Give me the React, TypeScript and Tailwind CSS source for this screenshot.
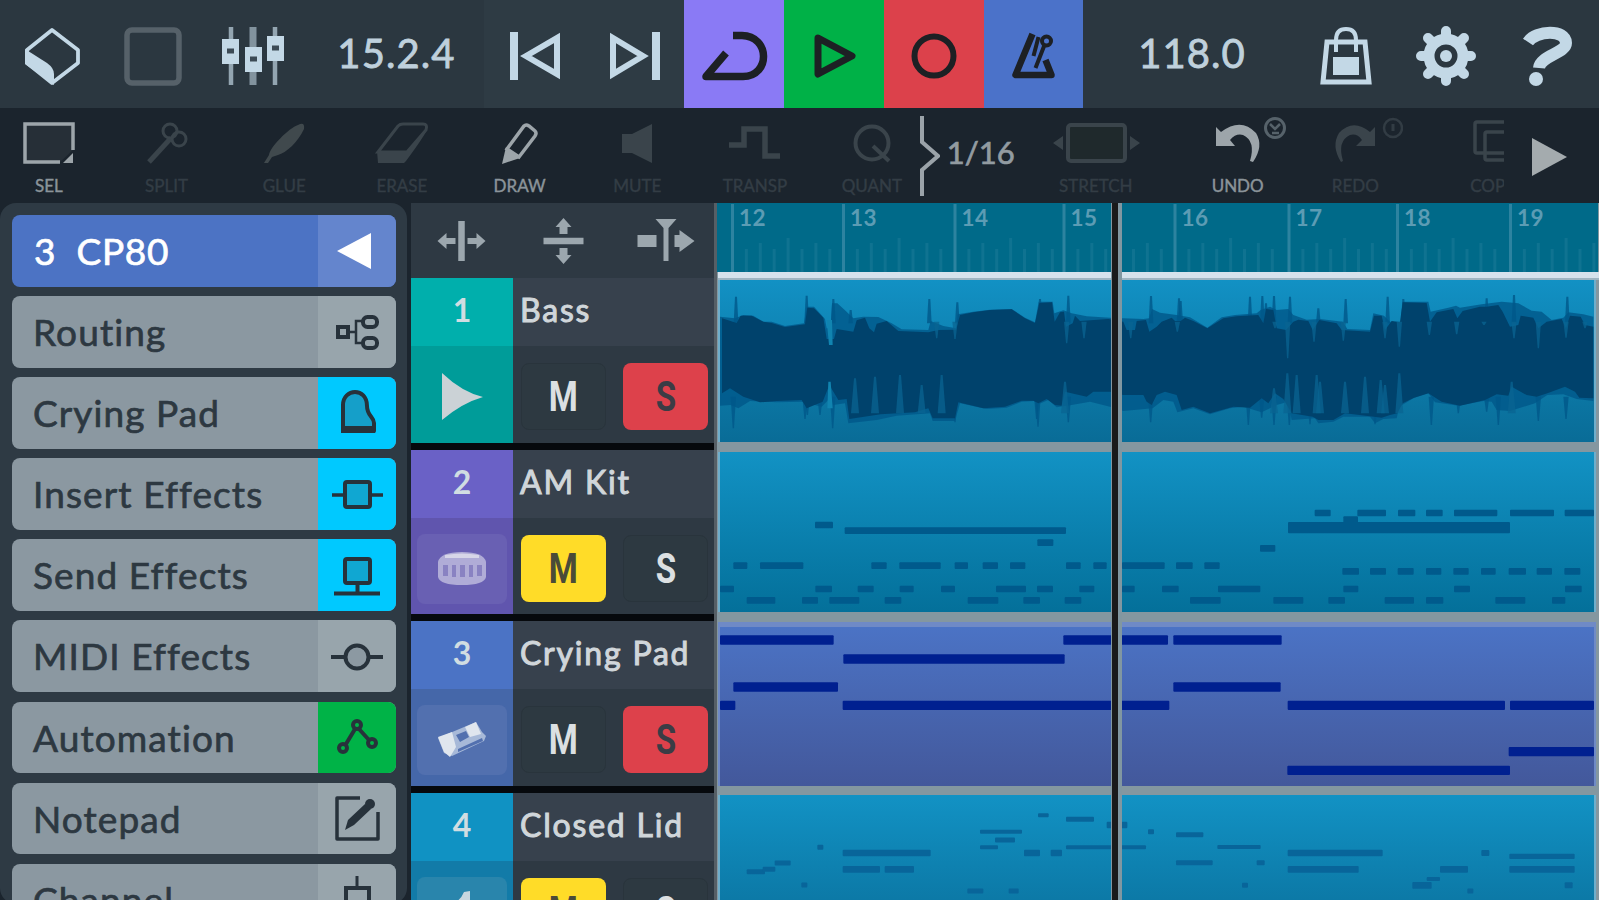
import type { ReactNode } from 'react'

type Note = [x: number, y: number, w: number, h?: number]

// Icons are drawn around a 0,0 centre
function Glyph({ w, h, className = '', children }: { w: number; h: number; className?: string; children: ReactNode }) {
  return (
    <svg width={w} height={h} viewBox={`${-w / 2} ${-h / 2} ${w} ${h}`} className={`shrink-0 ${className}`} fill="none" stroke="currentColor">
      {children}
    </svg>
  )
}

function Tool({ label, active, className = 'w-[117.7px]', children }: { label: string; active?: boolean; className?: string; children: ReactNode }) {
  return (
    <div className={`flex shrink-0 flex-col items-center ${className} ${active ? 'text-[#9da5aa]' : 'text-[#3a444b]'}`}>
      <Glyph w={96} h={60} className="mt-[5px]">{children}</Glyph>
      <span className={`mt-[2px] text-[17px] leading-[22px] whitespace-nowrap [-webkit-text-stroke:0.4px] ${active ? 'text-[#8b949a]' : 'text-[#333d45]'}`}>{label}</span>
    </div>
  )
}

function TopBar() {
  return (
    <header className="flex h-[108px] shrink-0 items-stretch bg-[#2b3740] text-[#c3d8e6]">
      <div className="flex w-[103px] items-center justify-center">
        <Glyph w={70} h={70} className="mt-[4px]">
          <path d="M0 -26 L-25 -6 V7 L0 27 L26 7 V-6 Z" strokeWidth="3.8" strokeLinejoin="round" />
          <path d="M-27 -7 L-5 7 Q2 12 2 18 V29 L-27 8 Z" fill="currentColor" stroke="none" />
        </Glyph>
      </div>
      <div className="flex w-[100px] items-center justify-center text-[#566169]">
        <Glyph w={70} h={70} className="mt-[4px]">
          <rect x="-26" y="-26" width="52" height="53" rx="5" strokeWidth="5.5" />
        </Glyph>
      </div>
      <div className="flex w-[100px] items-center justify-center">
        <Glyph w={80} h={70} className="mt-[4px]">
          <path d="M-22 -29 V29 M22 -29 V29" strokeWidth="4.5" stroke="#93a5b1" />
          <path d="M0 -29 V29" strokeWidth="7" stroke="#82939e" />
          <g fill="currentColor" stroke="none">
            <rect x="-31" y="-17" width="17" height="25" />
            <rect x="-8" y="-9" width="17" height="25" />
            <rect x="14" y="-20" width="17" height="25" />
          </g>
          <path d="M-26 -5 h7 M-3 3 h7 M19 -8 h7" strokeWidth="5" stroke="#3c4a55" />
        </Glyph>
      </div>
      <div className="flex w-[181px] items-center justify-center pb-[2px] pl-[6px] text-[40px] tracking-[1.1px] text-[#bfd0dc] [-webkit-text-stroke:0.8px]">15.2.4</div>
      <div className="flex w-[200px] items-center bg-[#2e3b44]">
        <Glyph w={100} h={70} className="mt-[4px]">
          <path d="M-20 -24 V24" strokeWidth="8" />
          <path d="M-8 0 L23 -18 V18 Z" strokeWidth="6" />
        </Glyph>
        <Glyph w={100} h={70} className="mt-[4px]">
          <path d="M22 -24 V24" strokeWidth="8" />
          <path d="M9 0 L-21 -18 V18 Z" strokeWidth="6" />
        </Glyph>
      </div>
      <div className="flex w-[100px] items-center bg-[#8a7af5] text-[#1d2024]">
        <Glyph w={100} h={70} className="mt-[4px]">
          <path d="M-1 -20.500 H8 C36 -20 37 20 9 20.500 H-28 L-8 -3" strokeWidth="7.500" strokeLinejoin="round" />
        </Glyph>
      </div>
      <div className="flex w-[100px] items-center bg-[#00b147] text-[#1d2024]">
        <Glyph w={100} h={70} className="mt-[4px]">
          <path d="M-16 -18 L18 0 L-16 18 Z" strokeWidth="7" strokeLinejoin="round" />
        </Glyph>
      </div>
      <div className="flex w-[100px] items-center bg-[#dc414b] text-[#1d2024]">
        <Glyph w={100} h={70} className="mt-[4px]">
          <circle cx="0" cy="0" r="19.500" strokeWidth="6" />
        </Glyph>
      </div>
      <div className="flex w-[99px] items-center bg-[#4b72c9] text-[#1d2024]">
        <Glyph w={99} h={70} className="mt-[4px]">
          <path d="M-1 -22 L-18 19 H18 L12 4" strokeWidth="6.500" strokeLinejoin="round" />
          <path d="M2 12 L11 -11 M0 0 L5 -19" strokeWidth="4" />
          <circle cx="13" cy="-15" r="4.500" strokeWidth="4" />
        </Glyph>
      </div>
      <div className="flex w-[213px] items-center justify-center pb-[2px] pl-[5px] text-[40px] tracking-[1.1px] text-[#bfd0dc] [-webkit-text-stroke:0.8px]">118.0</div>
      <div className="flex w-[100px] items-center">
        <Glyph w={100} h={70} className="mt-[4px]">
          <path d="M-19 -14 H19 L23 26 H-23 Z" strokeWidth="5" />
          <path d="M-10 -4 V-16 Q-10 -27 0 -27 Q10 -27 10 -16 V-4" strokeWidth="4" />
          <rect x="-13" y="1" width="26" height="18" fill="currentColor" stroke="none" />
        </Glyph>
      </div>
      <div className="flex w-[101px] items-center">
        <Glyph w={100} h={70} className="mt-[4px]">
          <circle r="17" strokeWidth="11" />
          <circle r="6" fill="currentColor" stroke="none" />
          <path
            d="M0 -20 V-25 M0 20 V25 M-20 0 H-25 M20 0 H25 M14 -14 L18 -18 M-14 14 L-18 18 M14 14 L18 18 M-14 -14 L-18 -18"
            strokeWidth="10"
            strokeLinecap="round"
          />
        </Glyph>
      </div>
      <div className="flex w-[102px] items-center">
        <Glyph w={102} h={70} className="mt-[4px]">
          <path d="M-20 -14 C-12 -26 18 -27 18 -13 C18 -3 -8 0 -9 12" strokeWidth="12" />
          <circle cx="-12" cy="23" r="7" fill="currentColor" stroke="none" />
        </Glyph>
      </div>
    </header>
  )
}

function Toolbar() {
  return (
    <div className="flex h-[95px] shrink-0 bg-[#1b242d]">
      <Tool label="SEL" active className="-ml-[10px] w-[117.7px]">
        <path d="M24 7 V-19 H-24 V19 H11" strokeWidth="3.5" fill="#262f37" />
        <path d="M24 10 V20 H14 Z" fill="currentColor" stroke="none" />
      </Tool>
      <Tool label="SPLIT">
        <path d="M-18 19 L4 -5" strokeWidth="5" />
        <circle cx="3" cy="-12" r="7" strokeWidth="3" />
        <circle cx="12" cy="-4" r="7" strokeWidth="3" />
      </Tool>
      <Tool label="GLUE">
        <path d="M-20 20 L-15 12 C-14 4 5 -15 14 -18 Q21 -22 20 -14 C14 -1 2 10 -6 12 L-12 14 L-16 20 Z" fill="#40494d" stroke="none" />
      </Tool>
      <Tool label="ERASE">
        <path d="M-24 9 L-4 -17 Q-2 -19 1 -19 H21 Q26 -19 24 -13 L5 9 Z" strokeWidth="3" />
        <path d="M-25 8 H5 L25 -14 Q24 -9 4 18 L2 20 H-24 Z" fill="currentColor" stroke="none" />
      </Tool>
      <Tool label="DRAW" active>
        <path d="M-13 6 L4 -17 Q6 -19 9 -17 L15 -12 Q17 -10 15 -7 L-1 14 Z" strokeWidth="3.5" />
        <path d="M-14 4 L0 15 L-18 21 Z" fill="currentColor" stroke="none" />
      </Tool>
      <Tool label="MUTE">
        <path d="M-15 -9 H-5 L15 -19 V20 L-5 10 H-15 Z" fill="currentColor" stroke="none" />
      </Tool>
      <Tool label="TRANSP">
        <path d="M-26 2 H-11 V-14 H10 V13 H25" strokeWidth="5.5" />
      </Tool>
      <Tool label="QUANT" className="ml-[12px] w-[92px]">
        <circle cx="0" cy="0" r="16.500" strokeWidth="4" />
        <path d="M1 3 L17 18" strokeWidth="4" />
      </Tool>
      <Glyph w={22} h={80} className="mt-[8px] text-[#9ba3a9]">
        <path d="M-7 -40 V-14 L9 0 L-7 14 V40" strokeWidth="4" />
      </Glyph>
      <span className="mt-[22px] ml-[7px] w-[100px] text-[31px] leading-[44px] text-[#929ba1] [-webkit-text-stroke:0.7px]">1/16</span>
      <Tool label="STRETCH" className="ml-[1px] w-[96px]">
        <rect x="-28" y="-18" width="57" height="36" rx="3" strokeWidth="4" fill="#1f292c" />
        <path d="M-33 -7 V7 L-43 0 Z M34 -7 V7 L44 0 Z" fill="currentColor" stroke="none" />
      </Tool>
      <Tool label="UNDO" active className="ml-[35px] w-[117.7px]">
        <path d="M-22 -16 L-17 -11 Q3 -26 18 -10 Q26 3 15 19 L12 18 Q18 -2 5 -8 Q-2 -10 -8 -3 L-3 3 H-22 Z" fill="currentColor" stroke="none" />
        <circle cx="37" cy="-15" r="9.500" strokeWidth="3" stroke="#56626a" />
        <path d="M32 -19 L37 -14 L42 -19 M34 -10 H41" strokeWidth="2.5" stroke="#56626a" />
      </Tool>
      <Tool label="REDO">
        <path d="M20 -16 L15 -11 Q-2 -25 -16 -10 Q-24 3 -14 19 L-12 18 Q-18 -2 -5 -8 Q2 -10 7 -3 L1 3 H20 Z" fill="currentColor" stroke="none" />
        <circle cx="38" cy="-15" r="9" strokeWidth="2.5" stroke="#323c44" />
        <path d="M38 -19 V-12" strokeWidth="3" stroke="#323c44" />
      </Tool>
      <div className="ml-[56px] w-[34px] overflow-hidden text-[#3a444b]">
        <svg width="60" height="60" viewBox="0 0 60 60" className="mt-[5px]" fill="none" stroke="currentColor" strokeWidth="3.5">
          <rect x="5" y="9" width="34" height="31" rx="2" />
          <rect x="15" y="19" width="34" height="28" rx="2" />
        </svg>
        <span className="mt-[2px] block text-[17px] leading-[22px] whitespace-nowrap text-[#333d45] [-webkit-text-stroke:0.4px]">COPY</span>
      </div>
      <Glyph w={36} h={40} className="mt-[28px] ml-[27px] text-[#a4abae]">
        <path d="M-17 -18 L18 1 L-17 20 Z" fill="currentColor" stroke="none" />
      </Glyph>
    </div>
  )
}

const icons: Record<string, ReactNode> = {
  back: <path d="M-20 0 L14 -18 V18 Z" fill="white" stroke="none" />,
  routing: (
    <g strokeWidth="4">
      <rect x="-19" y="-5" width="10" height="10" />
      <path d="M-9 0 H-1 M6 -11 H-1 V11 H6" strokeWidth="2.5" />
      <rect x="6" y="-15" width="14" height="10" rx="4.500" />
      <rect x="6" y="6" width="14" height="10" rx="4.500" />
    </g>
  ),
  piano: (
    <g>
      <path d="M-14 18 V-8 C-14 -25 10 -26 10 -7 C10 3 17 4 17 10 V18 Z" strokeWidth="4" fill="#159fc9" strokeLinejoin="round" />
      <path d="M-16 16.500 H18" strokeWidth="7" />
    </g>
  ),
  insert: (
    <g strokeWidth="4">
      <rect x="-12" y="-12" width="25" height="25" rx="2" fill="#10a7d2" />
      <path d="M-25 1 H-12 M13 1 H26" strokeWidth="3.500" />
    </g>
  ),
  send: (
    <g strokeWidth="4">
      <rect x="-12" y="-16" width="25" height="24" rx="2" fill="#10a7d2" />
      <path d="M0.500 8 V18 M-23 18.500 H23" />
    </g>
  ),
  midi: (
    <g strokeWidth="4">
      <circle r="11.500" cy="1" fill="#8c99a2" />
      <path d="M-26 1 H-12 M12 1 H26" />
    </g>
  ),
  automation: (
    <g strokeWidth="4">
      <circle cx="0" cy="-12" r="4" />
      <circle cx="-14" cy="11" r="4" />
      <circle cx="15" cy="6" r="4" />
      <path d="M-11 7 L-2 -8 M2 -8 L12 3" />
    </g>
  ),
  notepad: (
    <g>
      <path d="M3 -20 H-20 V21 H21 V-6" strokeWidth="3.500" strokeLinejoin="round" />
      <path d="M-12 12 L-9 2 L8 -14 L14 -9 L-3 7 Z" fill="currentColor" stroke="none" />
      <circle cx="13" cy="-14" r="5" fill="currentColor" stroke="none" />
    </g>
  ),
  channel: (
    <g strokeWidth="4">
      <path d="M0 -24 V-12" strokeWidth="3" />
      <rect x="-11" y="-12" width="23" height="30" />
    </g>
  ),
}

const inspector = [
  { label: 'Routing', icon: 'routing', color: 'bg-[#98a5ac]' },
  { label: 'Crying Pad', icon: 'piano', color: 'bg-[#00c9ff]' },
  { label: 'Insert Effects', icon: 'insert', color: 'bg-[#00c9ff]' },
  { label: 'Send Effects', icon: 'send', color: 'bg-[#00c9ff]' },
  { label: 'MIDI Effects', icon: 'midi', color: 'bg-[#98a5ac]' },
  { label: 'Automation', icon: 'automation', color: 'bg-[#00b347]' },
  { label: 'Notepad', icon: 'notepad', color: 'bg-[#98a5ac]' },
  { label: 'Channel', icon: 'channel', color: 'bg-[#98a5ac]' },
]

function Inspector() {
  return (
    <aside className="flex h-[701px] w-[407px] shrink-0 flex-col gap-[9.6px] rounded-[16px] bg-[#2e3a44] pt-[12px] pr-[11px] pl-[12px]">
      <div className="flex h-[71.5px] shrink-0 overflow-hidden rounded-[8px] bg-[#4c73c4] text-white">
        <span className="flex flex-1 items-center pl-[22px] text-[37px] tracking-[0.7px] whitespace-pre [-webkit-text-stroke:0.7px]">3  CP80</span>
        <div className="flex w-[78px] items-center justify-center bg-[#6485cd]">
          <Glyph w={60} h={60}>{icons.back}</Glyph>
        </div>
      </div>
      {inspector.map((item) => (
        <div key={item.label} className="flex h-[71.5px] shrink-0 overflow-hidden rounded-[8px] bg-[#8b98a1] text-[#27323b]">
          <span className="flex flex-1 items-center pl-[21px] text-[37px] tracking-[1.1px] whitespace-nowrap text-[#2d3841] [-webkit-text-stroke:0.7px]">{item.label}</span>
          <div className={`flex w-[78px] items-center justify-center ${item.color}`}>
            <Glyph w={60} h={60}>{icons[item.icon]}</Glyph>
          </div>
        </div>
      ))}
    </aside>
  )
}

const tracks = [
  {
    name: 'Bass',
    top: 'bg-[#00afac]',
    bottom: 'bg-[#009c99]',
    pad: '',
    mute: false,
    solo: true,
    icon: <path d="M-20 -24 Q0 -5 21 0 Q0 6 -20 23 Z" fill="#cbd2d6" stroke="none" />,
  },
  {
    name: 'AM Kit',
    top: 'bg-[#6a61c6]',
    bottom: 'bg-[#6055ae]',
    pad: 'bg-[#6960b3]',
    mute: true,
    solo: false,
    icon: (
      <g stroke="none">
        <path d="M-24 -7 Q-22 -17 0 -17 Q22 -17 24 -7 V8 Q22 16 0 16 Q-22 16 -24 8 Z" fill="#b0acd7" />
        <path d="M-17 -14 Q0 -17 17 -14 V-11 H-17 Z" fill="#d7d6e8" />
        <path d="M-19 -4 h5 v11 h-5 Z M-10 -4 h4 v12 h-4 Z M-2 -4 h5 v12 h-5 Z M7 -4 h4 v12 h-4 Z M15 -4 h5 v11 h-5 Z" fill="#8982c2" />
      </g>
    ),
  },
  {
    name: 'Crying Pad',
    top: 'bg-[#4b73c5]',
    bottom: 'bg-[#4567a9]',
    pad: 'bg-[#5270af]',
    mute: false,
    solo: true,
    icon: (
      <g stroke="none">
        <path d="M-24 -2 L14 -18 L20 -8 L24 -4 L22 1 L-10 16 L-18 13 Z" fill="#a7b9d8" />
        <path d="M-24 -3 L-10 -8 L-6 7 L-12 17 L-18 12 Z M3 -13 L14 -18 L19 -6 L8 -3 Z" fill="#e0e6ee" />
        <path d="M-6 -5 L4 -9 L7 -3 L-2 2 Z M-4 9 L20 -2 L21 1 L-4 12 Z" fill="#5270af" />
      </g>
    ),
  },
  {
    name: 'Closed Lid',
    top: 'bg-[#1092c3]',
    bottom: 'bg-[#127ba8]',
    pad: 'bg-[#2985ac]',
    mute: true,
    solo: false,
    icon: <path d="M-5 20 V-11 Q-1 -13 2 -20 L8 -21 V20 Z" fill="#c8d6df" stroke="none" />,
  },
]

function TrackList() {
  return (
    <section className="ml-[4px] flex w-[303px] shrink-0 flex-col bg-[#06090d]">
      <div className="flex h-[75px] shrink-0 items-center bg-[#2e3943] text-[#9ca7ae]">
        <Glyph w={101} h={60}>
          <path d="M0 -20 V20" strokeWidth="6.500" />
          <path d="M-24 0 L-15 -8 V-3 H-6 V3 H-15 V8 Z M24 0 L15 -8 V-3 H6 V3 H15 V8 Z" fill="currentColor" stroke="none" />
        </Glyph>
        <Glyph w={101} h={60}>
          <path d="M-19 0 H21" strokeWidth="6.500" />
          <path d="M1 -23 L-7 -14 H-3 V-7 H5 V-14 H9 Z M1 23 L-7 14 H-3 V7 H5 V14 H9 Z" fill="currentColor" stroke="none" />
        </Glyph>
        <Glyph w={101} h={60}>
          <path d="M-8 -22 H13 L5 -13 V20 H0 V-13 Z M-26 -6 H-7 V6 H-26 Z M11 -6 H16 V-11 L31 0 L16 11 V6 H11 Z" fill="currentColor" stroke="none" />
        </Glyph>
      </div>
      {tracks.map((track, i) => (
        <div key={track.name} className="mb-[7px] flex h-[164.7px] shrink-0">
          <div className={`flex w-[102px] flex-col ${track.bottom}`}>
            <div className={`flex h-[68px] items-center justify-center pb-[4px] text-[32px] font-bold text-[#d0dde2] ${track.top}`}>{i + 1}</div>
            <div className={`mx-[6px] mt-[16px] flex h-[70px] items-center justify-center rounded-[8px] ${track.pad}`}>
              <Glyph w={60} h={60}>{track.icon}</Glyph>
            </div>
          </div>
          <div className="flex flex-1 flex-col bg-[#2e3943]">
            <div className="flex h-[68px] items-center bg-[#37414d] pb-[4px] pl-[7px] text-[32px] tracking-[1.8px] whitespace-nowrap text-[#d0d6da] [-webkit-text-stroke:1px]">
              {track.name}
            </div>
            <div className="flex gap-[17px] pt-[17px] pl-[8px] font-[Roboto] text-[42px] font-bold">
              <div className={`flex h-[67px] w-[85px] items-center justify-center rounded-[8px] ${track.mute ? 'bg-[#ffdc28] text-[#4a4b38]' : 'border border-[#29343c] bg-[#2d3941] text-[#dce0e2]'}`}>
                <span className="scale-x-[.79]">M</span>
              </div>
              <div className={`flex h-[67px] w-[85px] items-center justify-center rounded-[8px] ${track.solo ? 'bg-[#dd414b] text-[#3b3c45]' : 'border border-[#29343c] bg-[#2d3941] text-[#dce0e2]'}`}>
                <span className="scale-x-[.79]">S</span>
              </div>
            </div>
          </div>
        </div>
      ))}
    </section>
  )
}

// Clip drawings use three units per pixel

const waveOuter =
  'M30 365 L75 370 L100 360 L130 362 L160 380 L185 380 L225 393 L282 385 L290 335 L312 335 L345 372 L350 400 L362 400 L366 325 L382 325 L405 346 L430 370 L460 365 L505 366 L545 385 L575 403 L655 405 L662 378 L700 393 L738 400 L743 358 L790 350 L840 344 L905 342 L945 368 L975 382 L986 320 L1028 320 L1033 355 L1060 346 L1085 355 L1130 364 L1200 368 L1300 372 L1318 370 L1326 342 L1350 353 L1400 360 L1440 367 L1492 398 L1535 367 L1575 360 L1640 355 L1652 345 L1680 335 L1700 345 L1735 342 L1750 360 L1790 374 L1830 372 L1898 380 L1912 402 L1980 405 L1990 355 L2022 362 L2040 380 L2072 380 L2078 320 L2155 320 L2162 350 L2215 338 L2238 332 L2250 338 L2315 328 L2345 324 L2375 320 L2425 325 L2465 347 L2495 350 L2525 375 L2560 368 L2575 352 L2620 358 L2650 365 ' +
  'L2650 618 L2600 612 L2560 598 L2512 600 L2475 625 L2400 648 L2360 645 L2345 620 L2320 618 L2245 632 L2175 622 L2155 595 L2110 610 L2068 635 L2060 670 L2020 672 L1995 685 L1980 665 L1900 665 L1870 680 L1825 685 L1815 670 L1745 675 L1735 620 L1700 630 L1655 652 L1600 635 L1560 640 L1500 658 L1450 640 L1402 652 L1390 620 L1360 615 L1328 640 L1240 648 L1200 635 L1140 620 L1085 630 L1040 637 L1015 615 L985 628 L972 618 L935 620 L890 638 L830 642 L750 625 L735 678 L668 678 L660 655 L560 662 L500 675 L415 685 L405 625 L370 630 L355 615 L335 635 L275 620 L200 622 L120 618 L85 640 L62 630 L30 632 Z'

const waveInner =
  'M36 370 L80 384 L92 362 L125 362 L160 380 L185 384 L225 396 L285 388 L292 338 L312 340 L340 368 L350 432 L372 432 L380 402 L430 410 L440 376 L465 368 L478 400 L492 412 L500 386 L530 378 L565 408 L655 412 L685 405 L738 404 L750 360 L790 352 L840 345 L905 343 L945 370 L975 384 L988 324 L1026 322 L1034 380 L1050 352 L1062 350 L1068 395 L1088 385 L1095 362 L1110 378 L1195 372 L1240 380 L1250 405 L1275 405 L1280 378 L1308 375 L1318 410 L1340 395 L1355 380 L1385 368 L1395 378 L1412 378 L1425 368 L1450 378 L1492 400 L1540 370 L1580 364 L1645 360 L1660 385 L1668 342 L1690 345 L1700 400 L1728 405 L1750 380 L1765 374 L1795 378 L1808 405 L1828 375 L1880 385 L1895 405 L1980 410 L1992 362 L2015 362 L2025 405 L2045 378 L2070 382 L2078 322 L2150 324 L2160 380 L2180 352 L2230 342 L2242 370 L2258 348 L2310 335 L2330 335 L2365 330 L2378 350 L2400 395 L2425 390 L2432 362 L2470 368 L2485 400 L2510 380 L2555 372 L2568 400 L2580 362 L2612 365 L2625 390 L2650 395 ' +
  'L2650 610 L2608 608 L2595 590 L2565 575 L2512 595 L2480 605 L2450 600 L2405 575 L2395 602 L2360 598 L2325 615 L2250 632 L2195 620 L2155 595 L2112 608 L2078 625 L2062 655 L2040 660 L2015 668 L1992 665 L1905 655 L1870 675 L1825 675 L1808 665 L1745 655 L1720 612 L1695 595 L1675 625 L1655 610 L1620 638 L1570 635 L1500 655 L1450 635 L1415 645 L1400 600 L1365 590 L1340 600 L1325 630 L1310 620 L1300 600 L1240 600 L1200 590 L1150 590 L1130 605 L1065 590 L1055 632 L1035 630 L1010 612 L985 625 L970 617 L935 617 L885 635 L820 640 L745 622 L735 670 L668 670 L655 640 L615 652 L512 658 L418 672 L410 612 L385 615 L358 570 L338 620 L290 640 L275 615 L200 618 L150 622 L100 605 L60 580 L36 595 Z'

// x and tip of each transient, drawn outwards from the body
const peaks = [
  [78, 305], [290, 302], [370, 312], [422, 345], [658, 312], [742, 322], [990, 312], [1075, 302], [1323, 303], [1407, 310], [1412, 318], [1620, 305],
  [1657, 303], [1668, 325], [1692, 303], [1740, 305], [1825, 340], [1907, 312], [2033, 305], [2080, 312], [2330, 310], [2412, 300], [2572, 305],
]
const dips = [
  [70, 700], [285, 672], [292, 660], [330, 660], [368, 700], [735, 682], [980, 672], [984, 695], [1075, 682], [1322, 682], [1615, 690], [1655, 668], [1692, 690],
  [1738, 690], [1800, 688], [1995, 688], [2164, 690], [2245, 655], [2330, 650], [2365, 690], [2485, 678], [2568, 672],
]

// gaps inside the body, top edge and bottom edge
const topGaps = [
  [680, 430], [735, 432], [1070, 445], [1122, 430], [1262, 430], [1402, 410], [1695, 400], [1733, 490], [1812, 440], [1900, 437],
  [2025, 430], [2068, 455], [2158, 420], [2240, 418], [2322, 390], [2412, 430], [2485, 460], [2568, 428], [2625, 400],
]
const bottomGaps = [
  [435, 550], [495, 545], [570, 540], [635, 570], [695, 540], [1065, 560], [1732, 535], [1760, 540], [1820, 540], [1830, 560],
  [1905, 560], [1965, 545], [2012, 555], [2025, 570], [2068, 535], [1692, 580], [2405, 560],
]

function Waveform() {
  return (
    <svg viewBox="30 255 2622 486" preserveAspectRatio="none" className="size-full">
      <g fill="#00588a" fillOpacity="0.8">
        <path d={waveOuter} />
        {peaks.map(([x, y]) => (
          <path key={x} d={`M${x - 7} 385 L${x - 3} ${y} H${x + 3} L${x + 7} 385 Z`} />
        ))}
        {dips.map(([x, y]) => (
          <path key={x} d={`M${x - 8} 605 L${x - 2} ${y} H${x + 2} L${x + 8} 605 Z`} />
        ))}
      </g>
      <path d={waveInner} fill="#00426c" />
      <g fill="#0a6492" fillOpacity="0.75">
        {topGaps.map(([x, y]) => (
          <path key={x} d={`M${x - 8} 380 L${x - 2} ${y} H${x + 2} L${x + 8} 380 Z`} />
        ))}
        {bottomGaps.map(([x, y]) => (
          <path key={x} d={`M${x - 12} 655 L${x - 3} ${y} H${x + 3} L${x + 12} 655 Z`} />
        ))}
      </g>
      <path d="M350 375 L357 450 H368 L366 375 Z M352 640 L355 560 H362 L368 640 Z" fill="#1184b0" />
    </svg>
  )
}

const kitNotes: Note[] = [
  [315, 240, 54], [404, 257, 664], [982, 293, 48],
  [70, 362, 42], [150, 362, 130], [484, 362, 46], [568, 362, 124], [734, 362, 40], [818, 362, 46], [900, 362, 46],
  [1068, 362, 44], [1150, 362, 40], [1236, 362, 128], [1398, 362, 50], [1483, 362, 46],
  [30, 432, 42], [316, 432, 50], [443, 432, 48], [569, 432, 42], [693, 432, 42], [858, 432, 90], [981, 432, 48],
  [1108, 432, 45], [1236, 432, 38], [1356, 432, 50], [1524, 432, 127], [1900, 432, 45], [2232, 432, 48], [2565, 432, 50],
  [110, 466, 86], [276, 466, 48], [358, 466, 90], [524, 466, 50], [773, 466, 92], [940, 466, 50], [1064, 466, 50],
  [1440, 466, 92], [1690, 466, 90], [1855, 466, 50], [2024, 466, 88], [2148, 466, 52], [2356, 466, 90], [2526, 466, 40],
  [1650, 310, 46], [1814, 204, 48], [1942, 204, 86], [2064, 204, 52], [2148, 204, 50], [2232, 204, 130], [2400, 204, 132], [2564, 204, 88],
  [1900, 224, 44], [1734, 248, 666, 34],
  [1897, 379, 50], [1980, 379, 48], [2063, 379, 48], [2148, 379, 46], [2230, 379, 46], [2313, 379, 44], [2396, 379, 52], [2480, 379, 46], [2563, 379, 48],
]

const padNotes: Note[] = [
  [30, 585, 341], [1060, 585, 314], [1390, 585, 325],
  [400, 642, 664], [70, 726, 314], [1390, 726, 322],
  [30, 781, 46], [398, 781, 980], [1733, 781, 652], [2400, 781, 252],
  [2396, 920, 256], [1732, 976, 668],
]

const lidNotes: Note[] = [
  [110, 1280, 55], [158, 1273, 38], [194, 1254, 48], [322, 1207, 18], [274, 1320, 18],
  [398, 1224, 264, 20], [398, 1273, 112, 20], [524, 1273, 88, 20],
  [810, 1160, 126, 12], [855, 1185, 60], [810, 1207, 54, 12], [984, 1111, 32, 12], [1068, 1123, 84],
  [942, 1224, 48, 20], [1022, 1224, 34, 20], [1068, 1207, 240, 12], [1190, 1140, 62, 20], [1314, 1160, 18],
  [772, 1338, 48], [896, 1338, 30],
  [1398, 1169, 82], [1522, 1206, 130, 12], [1398, 1253, 110], [1640, 1253, 24], [1596, 1321, 18],
  [1733, 1224, 285, 20], [1733, 1273, 213, 20], [2107, 1321, 58, 20], [2150, 1302, 40, 12], [2190, 1273, 84, 20], [2314, 1224, 24, 18], [2272, 1338, 18],
  [2398, 1234, 196, 16], [2398, 1273, 196, 20], [2564, 1321, 24, 18],
]

function Notes({ notes, viewBox, color, size }: { notes: Note[]; viewBox: string; color: string; size: number }) {
  return (
    <svg viewBox={viewBox} preserveAspectRatio="none" className="size-full" fill={color}>
      {notes.map(([x, y, w, h = size], i) => (
        <rect key={i} x={x} y={y - h / 2} width={w} height={h} rx="3" />
      ))}
    </svg>
  )
}

const bars = [
  { label: '12', x: 14 },
  { label: '13', x: 125 },
  { label: '14', x: 236.5 },
  { label: '15', x: 345.5 },
  { label: '16', x: 456.5 },
  { label: '17', x: 570.5 },
  { label: '18', x: 679 },
  { label: '19', x: 792 },
]

function Timeline() {
  return (
    <section className="relative flex flex-1 flex-col overflow-hidden border-l-3 border-[#565f66] bg-[#8497a0]">
      <svg width="881" height="69" viewBox="0 0 881 69" className="block shrink-0 bg-[#006a89]">
        {bars.map((bar) => (
          <g key={bar.label}>
            <rect x={bar.x} y="1" width="3" height="68" fill="#2d83a0" />
            {[1, 2, 3, 4, 5, 6, 7].map((n) => (
              <rect key={n} x={bar.x + n * 13.9} y={n === 4 ? 35 : n % 2 ? 46 : 40} width="3" height={n === 4 ? 34 : n % 2 ? 23 : 29} fill="#0f7391" />
            ))}
            <text x={bar.x + 8} y="23" fontSize="22.5" fontWeight="bold" letterSpacing="0.5" fill="#5c9cb4">{bar.label}</text>
          </g>
        ))}
      </svg>
      <div className="ml-[1px] h-[8px] shrink-0 border-b-2 border-[#9fb5c2] bg-[#d6e2ec]" />
      <div className="mr-[3px] ml-[1px] h-[162px] shrink-0 border-x-2 border-[#6faecb] bg-linear-to-b from-[#1291c4] to-[#096c97]">
        <Waveform />
      </div>
      <div className="mt-[10px] mr-[3px] ml-[1px] h-[160px] shrink-0 border-x-2 border-[#6faecb] bg-linear-to-b from-[#1292c4] to-[#04709a]">
        <Notes notes={kitNotes} viewBox="30 21 2622 480" color="#005a8c" size={20} />
      </div>
      <div className="mt-[10px] mr-[3px] ml-[1px] h-[164px] shrink-0 border-x-2 border-t-[5px] border-[#6f8ac6] bg-linear-to-b from-[#4b73c5] to-[#43589b]">
        <Notes notes={padNotes} viewBox="30 546 2622 477" color="#002090" size={28} />
      </div>
      <div className="mt-[9px] mr-[3px] ml-[1px] h-[162px] shrink-0 border-x-2 border-[#6faecb] bg-linear-to-b from-[#1292c4] to-[#096c97]">
        <Notes notes={lidNotes} viewBox="30 1050 2622 486" color="#08659a" size={15} />
      </div>
      {/* playhead */}
      <div className="absolute inset-y-0 left-[394px] w-[11px] border-r-4 border-l border-[#8197a1] bg-[#191a1b]" />
    </section>
  )
}

export default function App() {
  return (
    <div className="flex h-[900px] w-[1599px] flex-col overflow-hidden bg-[#1b242d] font-[Lato,'Open_Sans',sans-serif]">
      <TopBar />
      <Toolbar />
      <main className="flex min-h-0 flex-1 overflow-hidden">
        <Inspector />
        <TrackList />
        <Timeline />
      </main>
    </div>
  )
}
